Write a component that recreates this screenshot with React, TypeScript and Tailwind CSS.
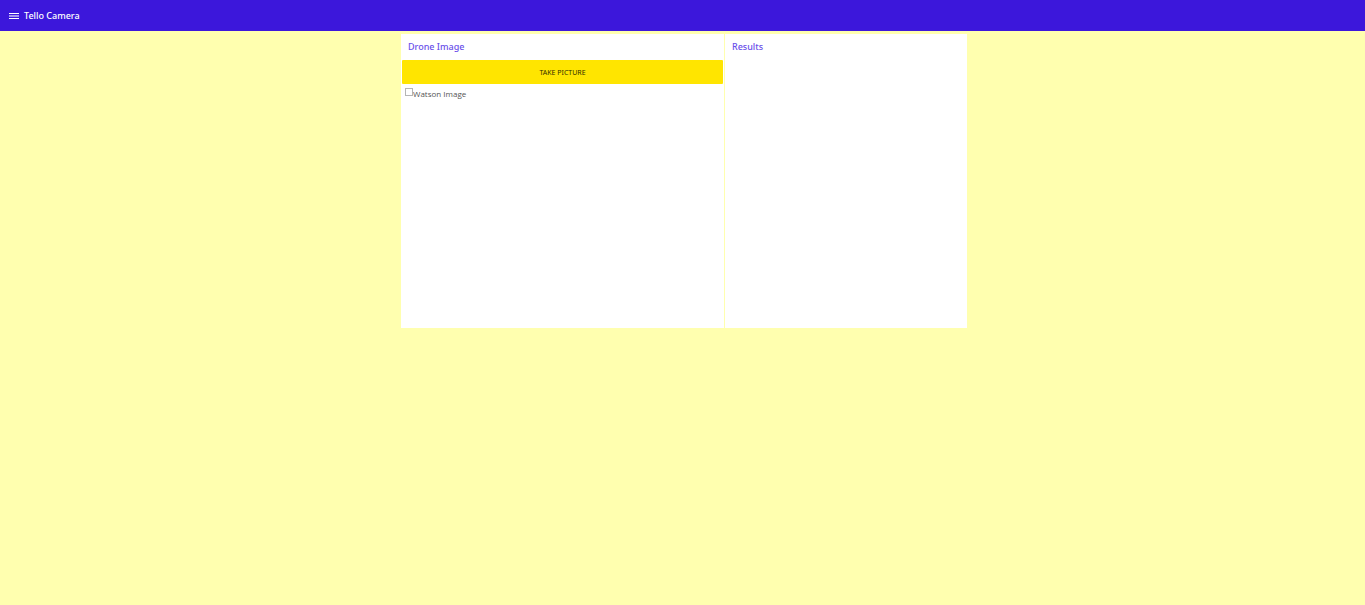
import type { ReactNode } from "react";

function Panel({ title, className, children }: { title: string; className: string; children?: ReactNode }) {
  return (
    <section className={`min-h-[294px] bg-white ${className}`}>
      <h2 className="px-[7px] py-[5px] text-[9px] leading-4 font-medium text-[#6a50ea]">{title}</h2>
      {children}
    </section>
  );
}

export default function App() {
  return (
    <div className="min-h-screen bg-[#ffffaf] font-['Noto_Sans','Open_Sans',sans-serif]">
      <header className="flex h-[31px] items-start bg-[#3c17db] px-[9px] pt-2 text-white">
        <button type="button" aria-label="Menu" className="flex h-4 w-[15px] items-center">
          <svg width="10" height="6" viewBox="0 0 10 6" fill="currentColor" shapeRendering="crispEdges" aria-hidden="true">
            <rect width="10" height="1" />
            <rect y="2" width="10" height="2" opacity="0.55" />
            <rect y="5" width="10" height="1" />
          </svg>
        </button>
        <h1 className="text-[9px] leading-4 font-medium">Tello Camera</h1>
      </header>
      <main className="flex flex-wrap justify-center gap-px pt-[3px] pl-[3px]">
        <Panel title="Drone Image" className="w-[323px]">
          <div className="px-px">
            <button
              type="button"
              className="block h-6 w-full rounded-[1px] bg-[#ffe500] pt-0.5 text-[7px] text-[#332e00] uppercase"
            >
              Take Picture
            </button>
          </div>
          <div role="img" aria-label="Watson Image" className="flex items-start px-1 pt-1 font-['Open_Sans','Noto_Sans',sans-serif] text-[8px] leading-3 text-[#555]">
            <span className="h-2 w-2 border border-[#b5b5b5]" />
            <span>Watson Image</span>
          </div>
        </Panel>
        <Panel title="Results" className="w-[242px]" />
      </main>
    </div>
  );
}
